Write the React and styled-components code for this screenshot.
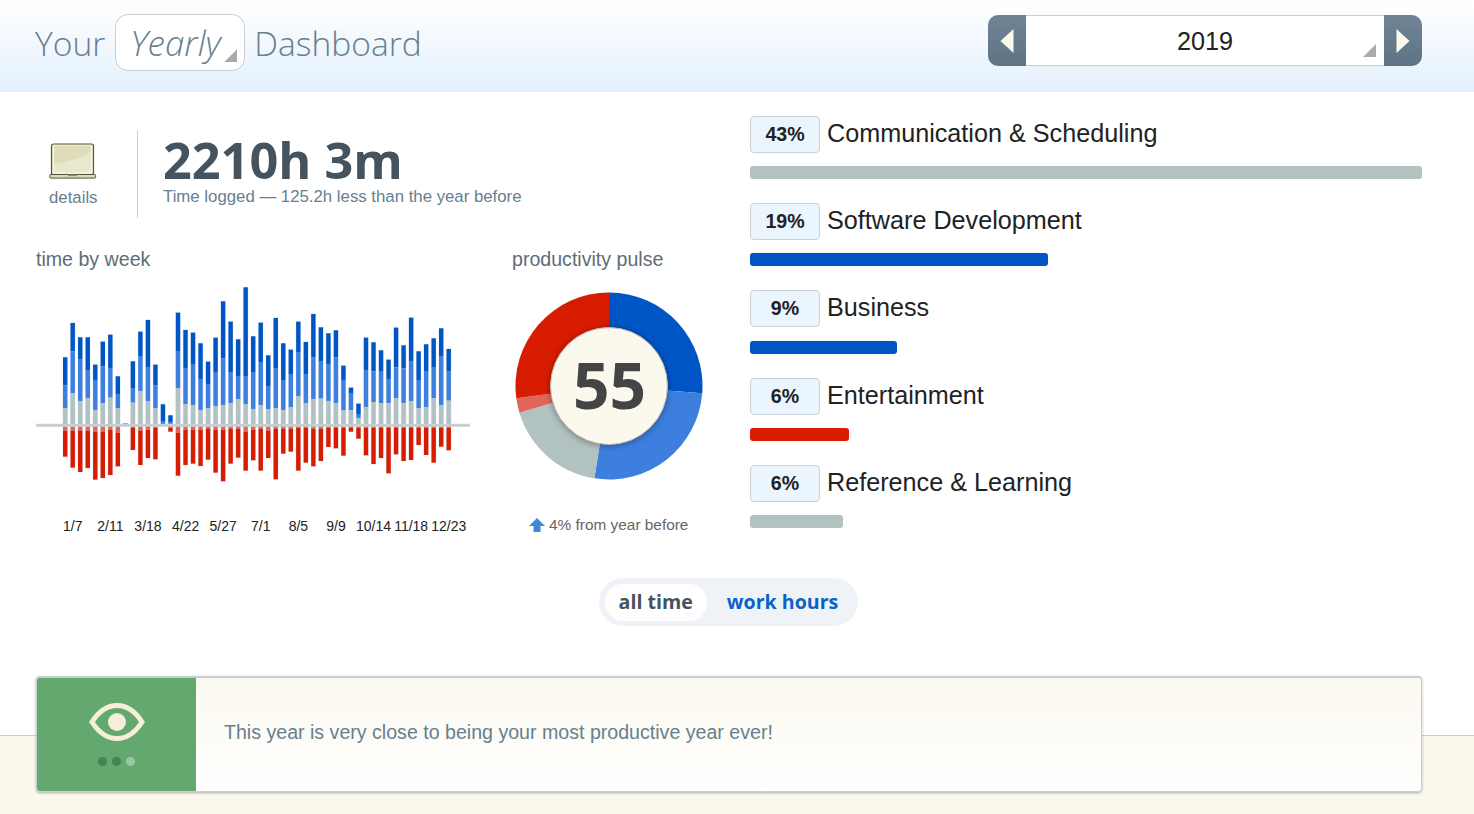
import React from 'react';
import styled, { createGlobalStyle } from 'styled-components';

const GlobalStyle = createGlobalStyle`
  html, body { margin: 0; padding: 0; background: #fff; }
  body { font-family: 'Liberation Sans', Arial, sans-serif; color: #222; }
`;

const Page = styled.div`
  width: 1474px;
  height: 814px;
  overflow: hidden;
  display: flex;
  flex-direction: column;
`;

// top bar
const Header = styled.header`
  height: 92px;
  box-sizing: border-box;
  padding: 14px 52px 0 35px;
  display: flex;
  justify-content: space-between;
  align-items: flex-start;
  background: linear-gradient(to bottom, #fff, #e3f0fc);
`;

const Title = styled.div`
  display: flex;
  align-items: center;
  gap: 10px;
  height: 57px;
  padding-top: 1px;
  box-sizing: border-box;
  font-family: 'Open Sans', sans-serif;
  font-weight: 300;
  font-size: 33.6px;
  color: #66808f;
`;

const TitleEnd = styled.span`
  margin-left: -1px;
`;

const Corner = styled.span`
  position: absolute;
  right: ${p => p.$right}px;
  bottom: 8px;
  width: 13px;
  height: 13px;
  background: #aaa;
  clip-path: polygon(100% 0, 100% 100%, 0 100%);
`;

const RangeSelect = styled.div`
  position: relative;
  width: 130px;
  height: 57px;
  margin-top: -1px;
  box-sizing: border-box;
  padding-left: 14px;
  display: flex;
  align-items: center;
  background: #fff;
  border: 1px solid #c9ced3;
  border-radius: 13px;
  font-style: italic;
  font-size: 35px;
`;

const YearPicker = styled.div`
  display: flex;
  height: 51px;
  margin-top: 1px;
  width: 434px;
`;

const NavButton = styled.div`
  width: 38px;
  display: flex;
  align-items: center;
  justify-content: center;
  background: linear-gradient(to bottom, #6f8496, #5f7383);
  border-radius: ${p => (p.$side === 'left' ? '10px 0 0 10px' : '0 10px 10px 0')};
`;

const YearValue = styled.div`
  position: relative;
  flex: 1;
  display: flex;
  align-items: center;
  justify-content: center;
  background: #fff;
  border-top: 1px solid #c9ced3;
  border-bottom: 1px solid #c9ced3;
  font-size: 25.2px;
  color: #222;
  padding-top: 1px;
  box-sizing: border-box;
`;

const Main = styled.main`
  display: flex;
  padding: 0 52px 0 36px;
  height: 486px;
`;

const LeftColumn = styled.section`
  width: 714px;
  flex-shrink: 0;
`;

const Summary = styled.div`
  display: flex;
  height: 88px;
  margin-top: 38px;
`;

const DetailsLink = styled.div`
  width: 102px;
  height: 88px;
  box-sizing: border-box;
  border-right: 1px solid #c9ced0;
  display: flex;
  flex-direction: column;
  align-items: flex-start;
  padding: 13px 0 0 13px;
  font-size: 16.8px;
  color: #66808f;
`;

const DetailsLabel = styled.span`
  margin: 9px 0 0 0;
`;

const SummaryText = styled.div`
  margin-left: 25px;
  padding-top: 2px;
`;

const TotalTime = styled.div`
  font-family: 'Open Sans', sans-serif;
  font-weight: 700;
  font-size: 50.4px;
  line-height: 56px;
  color: #44535e;
`;

const TotalNote = styled.div`
  font-size: 16.8px;
  line-height: 18px;
  color: #66808f;
`;

const Charts = styled.div`
  display: flex;
  margin-top: 29px;
`;

const WeekChart = styled.div`
  width: 476px;
  flex-shrink: 0;
`;

const ChartTitle = styled.div`
  font-size: 19.6px;
  line-height: 24px;
  color: #5f6c74;
`;

const WeekSvg = styled.svg`
  display: block;
  margin-top: 9px;
  width: 434px;
  height: 210px;
`;

const WeekLabels = styled.div`
  display: flex;
  width: 434px;
  margin-top: 28px;
  padding-left: 18px;
  font-size: 14px;
  line-height: 16px;
  color: #222;
`;

const WeekLabel = styled.span`
  width: 37.6px;
  flex-shrink: 0;
  text-align: center;
  white-space: nowrap;
`;

const Pulse = styled.div`
  width: 200px;
`;

const DonutWrap = styled.div`
  position: relative;
  width: 188px;
  height: 188px;
  margin: 21px 0 0 3px;
`;

const DonutCenter = styled.div`
  position: absolute;
  left: 35px;
  top: 35px;
  width: 118px;
  height: 118px;
  box-sizing: border-box;
  padding: 0 0 4px 1px;
  border-radius: 50%;
  background: #fbf8ee;
  border: 1px solid #bdb9ac;
  box-shadow: 0 1px 6px rgba(0, 0, 0, 0.35);
  display: flex;
  align-items: center;
  justify-content: center;
  font-family: 'Open Sans', sans-serif;
  font-weight: 700;
  font-size: 64px;
  color: #444;
`;

const PulseNote = styled.div`
  display: flex;
  align-items: center;
  gap: 4px;
  margin: 35px 0 0 17px;
  font-size: 15.4px;
  line-height: 20px;
  color: #666;
  white-space: nowrap;
`;

const Categories = styled.section`
  flex: 1;
  padding-top: 24px;
`;

const Category = styled.div`
  height: 87.2px;
`;

const CategoryHead = styled.div`
  display: flex;
  align-items: flex-start;
  height: 37px;
`;

const Percent = styled.div`
  width: 70px;
  height: 37px;
  box-sizing: border-box;
  border: 1px solid #c9d2da;
  border-radius: 4px;
  background: #ebf5fe;
  display: flex;
  align-items: center;
  justify-content: center;
  font-weight: 700;
  font-size: 19.6px;
  color: #222;
`;

const CategoryName = styled.div`
  margin-left: 7px;
  font-size: 25.2px;
  line-height: 34px;
  color: #222;
`;

const Bar = styled.div`
  height: 13px;
  margin-top: 13.2px;
  border-radius: 3px;
  background: ${p => p.$color};
`;

const Toggle = styled.div`
  align-self: center;
  margin-right: 17px;
  display: flex;
  align-items: center;
  height: 48px;
  box-sizing: border-box;
  padding: 0 6px;
  border-radius: 24px;
  background: #eff3f7;
  font-family: 'Open Sans', sans-serif;
  font-weight: 700;
  font-size: 19.6px;
`;

const ToggleOption = styled.div`
  height: 37px;
  box-sizing: border-box;
  padding: 0 14px 2px;
  display: flex;
  align-items: center;
  border-radius: 18px;
  background: ${p => (p.$active ? '#fff' : 'transparent')};
  color: ${p => (p.$active ? '#44535e' : '#0a62c9')};
  margin-left: ${p => (p.$active ? 0 : 6)}px;
`;

const Band = styled.footer`
  margin-top: 109px;
  height: 79px;
  box-sizing: border-box;
  padding: 0 52px 0 36px;
  border-top: 1px solid #ccc;
  background: #fbf8ee;
`;

const Notice = styled.div`
  display: flex;
  height: 116px;
  box-sizing: border-box;
  margin-top: -60px;
  border: 1px solid #c9ced0;
  border-top-width: 2px;
  border-radius: 4px;
  overflow: hidden;
  background: linear-gradient(to bottom, #fbf8ee, #fff);
  box-shadow: 0 1px 3px rgba(0, 0, 0, 0.3);
`;

const NoticeIcon = styled.div`
  width: 159px;
  flex-shrink: 0;
  background: #63a86f;
  display: flex;
  flex-direction: column;
  align-items: center;
  padding-top: 25px;
  box-sizing: border-box;
`;

const Dots = styled.div`
  display: flex;
  gap: 5px;
  margin-top: 16px;
`;

const Dot = styled.span`
  width: 9px;
  height: 9px;
  border-radius: 50%;
  background: ${p => (p.$on ? '#3f8650' : '#97c7a2')};
`;

const NoticeText = styled.div`
  display: flex;
  align-items: center;
  padding-left: 28px;
  font-size: 19.6px;
  color: #66808f;
  padding-bottom: 5px;
`;

// [dark top, light top, grey top, pale red end, red end], measured on a 3x crop, baseline 436
const WEEKS = [
  [232, 316, 384, 452, 530], [129, 214, 340, 452, 563], [172, 237, 363, 452, 576], [172, 270, 354, 452, 564],
  [254, 300, 390, 455, 599], [185, 259, 370, 455, 594], [164, 264, 353, 449, 585], [289, 342, 385, 458, 559],
  [430, 431, 432, 436, 436], [244, 324, 368, 443, 510], [155, 228, 333, 452, 555], [120, 261, 363, 449, 534],
  [254, 316, 384, 443, 538], [373, 423, 432, 436, 436], [406, 426, 432, 443, 455], [98, 213, 324, 458, 587],
  [150, 264, 372, 449, 555], [158, 252, 375, 449, 551], [190, 297, 390, 449, 558], [245, 312, 385, 446, 539],
  [173, 276, 378, 449, 578], [64, 235, 375, 449, 604], [125, 276, 370, 446, 551], [178, 288, 357, 446, 533],
  [22, 288, 372, 455, 572], [169, 276, 387, 449, 541], [128, 246, 375, 446, 572], [226, 318, 388, 452, 534],
  [114, 264, 385, 446, 598], [190, 300, 390, 446, 521], [209, 282, 382, 446, 515], [125, 216, 348, 443, 572],
  [186, 282, 369, 443, 548], [102, 232, 357, 446, 559], [142, 243, 356, 446, 543], [160, 252, 363, 443, 501],
  [151, 232, 369, 443, 505], [257, 300, 391, 443, 527], [323, 339, 391, 443, 455], [371, 402, 415, 443, 476],
  [173, 270, 381, 443, 526], [187, 274, 366, 443, 552], [211, 275, 370, 443, 534], [239, 297, 369, 443, 580],
  [143, 262, 355, 443, 523], [196, 265, 369, 443, 543], [113, 243, 363, 443, 540], [214, 300, 384, 443, 495],
  [193, 273, 381, 443, 525], [175, 261, 355, 443, 548], [145, 228, 375, 443, 500], [207, 273, 362, 443, 511],
];

const LABELS = ['1/7', '2/11', '3/18', '4/22', '5/27', '7/1', '8/5', '9/9', '10/14', '11/18', '12/23'];

const CATEGORIES = [
  { pct: '43%', name: 'Communication & Scheduling', width: 672, color: '#b1c2c0' },
  { pct: '19%', name: 'Software Development', width: 298, color: '#0055c4' },
  { pct: '9%', name: 'Business', width: 147, color: '#0055c4' },
  { pct: '6%', name: 'Entertainment', width: 99, color: '#dc1c00' },
  { pct: '6%', name: 'Reference & Learning', width: 93, color: '#b1c2c0' },
];

const SLICES = [
  { from: 0, to: 94.5, color: '#0055c4' },
  { from: 94.5, to: 189, color: '#3d7fdf' },
  { from: 189, to: 253.3, color: '#b1c2c0' },
  { from: 253.3, to: 262.4, color: '#e0665a' },
  { from: 262.4, to: 360, color: '#d81c00' },
];

const RADIUS = 93.5;

const polar = (deg, r) => {
  const a = (deg * Math.PI) / 180;
  return [94 + r * Math.sin(a), 94 - r * Math.cos(a)];
};

const slicePath = ({ from, to }) => {
  const [x1, y1] = polar(from, RADIUS);
  const [x2, y2] = polar(to, RADIUS);
  const large = to - from > 180 ? 1 : 0;
  return `M94 94L${x1} ${y1}A${RADIUS} ${RADIUS} 0 ${large} 1 ${x2} ${y2}Z`;
};

const Triangle = ({ dir }) => (
  <svg width="14" height="24" viewBox="0 0 14 24">
    <path d={dir === 'left' ? 'M13.5 0V24L0.5 12Z' : 'M0.5 0V24L13.5 12Z'} fill="#fbf8ee" />
  </svg>
);

const Laptop = () => (
  <svg width="48" height="36" viewBox="0 0 48 36">
    <rect x="2.5" y="1" width="42" height="31" rx="2" fill="#e8e6c9" stroke="#55563f" strokeWidth="1.2" />
    <rect x="4.5" y="3" width="38" height="27" fill="#e9e8cf" stroke="#f7f6e8" strokeWidth="1" />
    <path d="M5 3H42V8C34 15 18 19 5 21Z" fill="#dfddb9" />
    <rect x="0.7" y="31.5" width="46" height="3.6" rx="1.2" fill="#dcd9b4" stroke="#55563f" strokeWidth="1" />
    <rect x="19" y="31.5" width="9" height="1.6" fill="#8b8a6e" />
  </svg>
);

const WeekBars = () => (
  <WeekSvg viewBox="0 0 434 210">
    {WEEKS.map(([dark, light, grey, pale, red], i) => {
      const x = 27 + i * 7.52;
      const y = v => 145.3 - (436 - v) / 3;
      const rect = (top, bottom, color) => (
        <rect x={x} y={y(top)} width="4.4" height={Math.max((bottom - top) / 3, 0)} fill={color} />
      );
      return (
        <g key={i}>
          <rect x={x - 0.5} y={y(dark) - 0.5} width="5.4" height={(red - dark) / 3 + 1} fill="#d7e3f3" opacity="0.7" />
          {rect(dark, light, '#0055c4')}
          {rect(light, grey, '#3d7fdf')}
          {rect(grey, 436, '#b1c2c0')}
          {rect(436, pale, '#e0665a')}
          {rect(pale, red, '#d81c00')}
        </g>
      );
    })}
    <rect x="0" y="143.8" width="434" height="3" fill="#c8cfd1" />
  </WeekSvg>
);

const App = () => (
  <Page>
    <GlobalStyle />
    <Header>
      <Title>
        <span>Your</span>
        <RangeSelect>
          Yearly
          <Corner $right={7} />
        </RangeSelect>
        <TitleEnd>Dashboard</TitleEnd>
      </Title>
      <YearPicker>
        <NavButton $side="left"><Triangle dir="left" /></NavButton>
        <YearValue>
          2019
          <Corner $right={8} />
        </YearValue>
        <NavButton $side="right"><Triangle dir="right" /></NavButton>
      </YearPicker>
    </Header>

    <Main>
      <LeftColumn>
        <Summary>
          <DetailsLink>
            <Laptop />
            <DetailsLabel>details</DetailsLabel>
          </DetailsLink>
          <SummaryText>
            <TotalTime>2210h 3m</TotalTime>
            <TotalNote>Time logged — 125.2h less than the year before</TotalNote>
          </SummaryText>
        </Summary>
        <Charts>
          <WeekChart>
            <ChartTitle>time by week</ChartTitle>
            <WeekBars />
            <WeekLabels>
              {LABELS.map(l => <WeekLabel key={l}>{l}</WeekLabel>)}
            </WeekLabels>
          </WeekChart>
          <Pulse>
            <ChartTitle>productivity pulse</ChartTitle>
            <DonutWrap>
              <svg width="188" height="188" viewBox="0 0 188 188">
                {SLICES.map(s => <path key={s.from} d={slicePath(s)} fill={s.color} />)}
              </svg>
              <DonutCenter>55</DonutCenter>
            </DonutWrap>
            <PulseNote>
              <svg width="16" height="14" viewBox="0 0 16 14">
                <path d="M8 0L16 8H11.5V14H4.5V8H0Z" fill="#3e88d4" />
              </svg>
              4% from year before
            </PulseNote>
          </Pulse>
        </Charts>
      </LeftColumn>
      <Categories>
        {CATEGORIES.map(c => (
          <Category key={c.name}>
            <CategoryHead>
              <Percent>{c.pct}</Percent>
              <CategoryName>{c.name}</CategoryName>
            </CategoryHead>
            <Bar $color={c.color} style={{ width: c.width }} />
          </Category>
        ))}
      </Categories>
    </Main>

    <Toggle>
      <ToggleOption $active>all time</ToggleOption>
      <ToggleOption>work hours</ToggleOption>
    </Toggle>

    <Band>
      <Notice>
        <NoticeIcon>
          <svg width="56" height="38" viewBox="0 0 56 38">
            <path d="M3 19C10 8 18 2.5 28 2.5S46 8 53 19C46 30 38 35.5 28 35.5S10 30 3 19Z" fill="none" stroke="#f5efd9" strokeWidth="5" strokeLinejoin="miter" />
            <circle cx="28" cy="19" r="9" fill="#f5efd9" />
          </svg>
          <Dots>
            <Dot $on />
            <Dot $on />
            <Dot />
          </Dots>
        </NoticeIcon>
        <NoticeText>This year is very close to being your most productive year ever!</NoticeText>
      </Notice>
    </Band>
  </Page>
);

export default App;
